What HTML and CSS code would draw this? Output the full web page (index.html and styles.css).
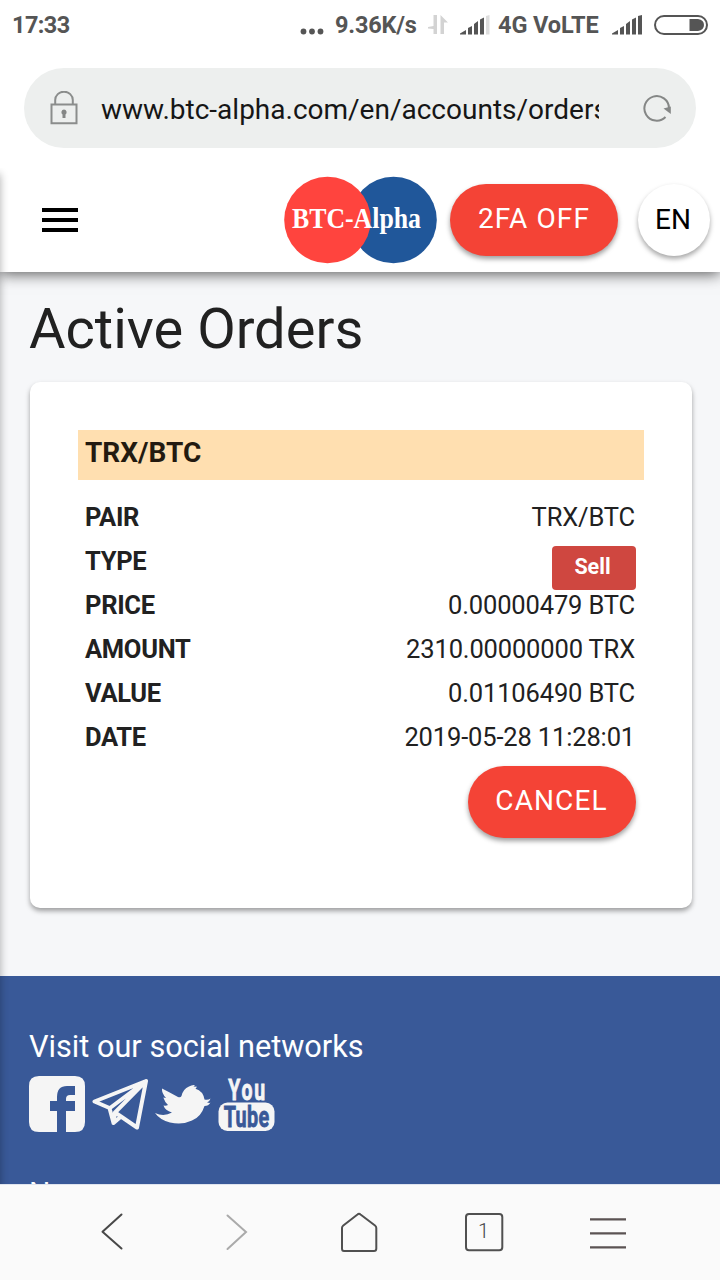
FILE: index.html
```html
<!DOCTYPE html>
<html lang="en">
<head>
<meta charset="utf-8">
<title>Active Orders</title>
<link rel="stylesheet" href="styles.css">
</head>
<body>
<div class="statusbar">
  <span class="clock">17:33</span>
  <div class="status-right">
    <svg class="st-dots" width="24" height="8" viewBox="0 0 24 8"><g fill="#555"><circle cx="3.5" cy="3.500" r="2.9"/><circle cx="12" cy="3.500" r="2.9"/><circle cx="20.500" cy="3.500" r="2.9"/></g></svg>
    <span class="speed">9.36K/s</span>
    <svg class="st-arrows" width="20" height="20" viewBox="0 0 20 20"><path fill="#d3d3d3" d="M5.500 0h3.500v19H5.500v-5L0 13.500V12l5.500-1zM12.500 0L20 7.500H16V19h-3.500z"/></svg>
    <svg class="st-sig" width="30" height="20" viewBox="0 0 30 20"><path fill="#555" d="M0 19.500v-1l6-3.500v4.500zM8 13l4-2v8.500H8zM14 9l4-3v13.500h-4zM20 4.500l4-2v17h-4z"/><path fill="#ddd" d="M26 1l3.500-1v19.500H26z"/></svg>
    <span class="net">4G VoLTE</span>
    <svg class="st-sig" width="30" height="20" viewBox="0 0 30 20"><path fill="#555" d="M0 19.500v-1l6-3.500v4.500zM8 13l4-2v8.500H8zM14 9l4-3v13.500h-4zM20 4.500l4-2v17h-4zM26 1l4-1v19.500h-4z"/></svg>
    <svg class="st-bat" width="54" height="20" viewBox="0 0 54 20"><rect x="1" y="1" width="52" height="18" rx="9" fill="none" stroke="#555" stroke-width="2"/><path fill="#555" d="M35.500 4H44q6 1 6 6t-6 6h-8.500z"/></svg>
  </div>
</div>
<div class="address">
  <svg class="lock" width="28" height="34" viewBox="0 0 28 34"><path d="M1.500 13.500h25v18.700h-25zM5.200 13V9a8.800 8.300 0 0 1 17.600 0V13" fill="none" stroke="#8b8d8c" stroke-width="2"/><path d="M14 18.500a2.700 2.700 0 0 1 1.500 4.900V27h-3v-3.600A2.700 2.700 0 0 1 14 18.500z" fill="#858786"/></svg>
  <span class="url">www.btc-alpha.com/en/accounts/orders</span>
  <svg class="reload" width="28" height="28" viewBox="0 0 28 28"><path d="M22.500 23A12.300 12.300 0 1 1 26 14" fill="none" stroke="#858786" stroke-width="2"/><path d="M20.500 14.500L27.800 12.500V20z" fill="#858786"/></svg>
</div>
<div class="page">
  <header class="topbar">
    <div class="burger"><i></i><i></i><i></i></div>
    <svg class="logo" width="154" height="88" viewBox="0 0 154 88"><circle cx="109.500" cy="44" r="43.300" fill="#20579a"/><circle cx="43.500" cy="44" r="43.300" fill="#ff443e"/><text x="8" y="51.500" textLength="129" lengthAdjust="spacingAndGlyphs">BTC-Alpha</text></svg>
    <button class="pill twofa">2FA OFF</button>
    <button class="lang">EN</button>
  </header>
  <main class="content">
    <h1>Active Orders</h1>
    <section class="card">
      <h2>TRX/BTC</h2>
      <dl>
        <div class="row"><dt>PAIR</dt><dd>TRX/BTC</dd></div>
        <div class="row"><dt>TYPE</dt><dd class="badge">Sell</dd></div>
        <div class="row"><dt>PRICE</dt><dd>0.00000479 BTC</dd></div>
        <div class="row"><dt>AMOUNT</dt><dd>2310.00000000 TRX</dd></div>
        <div class="row"><dt>VALUE</dt><dd>0.01106490 BTC</dd></div>
        <div class="row"><dt>DATE</dt><dd>2019-05-28 11:28:01</dd></div>
      </dl>
      <button class="pill cancel">CANCEL</button>
    </section>
  </main>
  <footer class="footer">
    <p class="social-title">Visit our social networks</p>
    <div class="social">
      <svg width="56" height="56" viewBox="0 0 56 56"><path fill="#f5f5f5" d="M10 0h36q10 0 10 10v36q0 10-10 10H37V35h9V25h-9v-2q0-4 4-4h5V10h-8q-10 0-10 11v4h-7v10h7v21H10Q0 56 0 46V10Q0 0 10 0z"/></svg>
      <svg width="57" height="56" viewBox="0 0 57 56"><path fill="none" stroke="#f5f5f5" stroke-width="4" stroke-linejoin="round" stroke-linecap="round" d="M54 5L2.500 25.500L17.500 32L21.500 47L29 40.500L45 51.500zM54 5L18 32M54 5L23 36.500L29 40.500M23 36.500L21.500 47"/></svg>
      <svg width="56" height="56" viewBox="0 0 56 56"><path fill="#f5f5f5" d="M0 37Q9 41 17 36.500Q10 34.500 8.500 29.500Q11 30 13 29Q10 26.500 8.300 21.500L11 22Q6.500 17 7 12.500Q14 16 23 21Q25.500 22 26.500 20Q28 13 34 10.500Q37 8.500 40 9L38.500 10.500L42 10.800L40.500 12.800Q48 15 49.500 23.500Q53 24.500 55.500 22.500Q55 25 52 26.500Q55 27.300 55.500 26.500Q53.500 30 49.500 30Q46 41 37 44.500Q28 49 15 46.500Q5 44 0 37z"/></svg>
      <svg width="57" height="56" viewBox="0 0 57 56"><rect x="0.500" y="26.500" width="56" height="28.500" rx="9" fill="#f5f5f5"/><text class="yt yt-top" transform="translate(10.200 23.500) scale(.65 1)" textLength="57" lengthAdjust="spacing">You</text><text class="yt yt-low" transform="translate(5.700 50.700) scale(.66 1)" textLength="69" lengthAdjust="spacing">Tube</text></svg>
    </div>
    <p class="news">News</p>
  </footer>
  <div class="drawer-edge"></div>
</div>
<nav class="bottomnav">
  <svg width="124" height="96" viewBox="50 1184 124 96"><path d="M121.500 1214.500L102.500 1231.800L121.500 1248.500" fill="none" stroke="#484848" stroke-width="2" stroke-linecap="round" stroke-linejoin="round"/></svg>
  <svg width="124" height="96" viewBox="174 1184 124 96"><path d="M227.500 1215.500L246 1232L227.500 1249" fill="none" stroke="#aaa" stroke-width="2" stroke-linecap="round"/></svg>
  <svg width="124" height="96" viewBox="298 1184 124 96"><path d="M357.500 1214.500Q359 1213 360.500 1214.500L375 1225.500Q376.300 1226.500 376.300 1228V1248.500Q376.300 1251 374 1251H344Q342 1251 342 1248.500V1228Q342 1226.500 343.300 1225.500z" fill="none" stroke="#505050" stroke-width="2" stroke-linejoin="round"/></svg>
  <svg width="124" height="96" viewBox="422 1184 124 96"><rect x="466" y="1214" width="36.300" height="36.300" rx="3" fill="none" stroke="#505050" stroke-width="2"/><text class="tabs" x="483.500" y="1238">1</text></svg>
  <svg width="124" height="96" viewBox="546 1184 124 96"><path d="M590 1219.300h36M590 1233.300h36M590 1247.300h36" stroke="#5b5353" stroke-width="2.200"/></svg>
</nav>
</body>
</html>
```
FILE: styles.css
```css
* { box-sizing: border-box; margin: 0; padding: 0; }
body { width: 720px; height: 1280px; overflow: hidden; background: #fff; color: #212121; font-family: Roboto, "Noto Sans", sans-serif; display: flex; flex-direction: column; }
button { border: 0; font-family: inherit; }
svg { display: block; flex: none; }

.statusbar { height: 68px; padding: 0 12px; display: flex; justify-content: space-between; align-items: flex-start; color: #555; font-size: 23.5px; font-weight: 700; line-height: 50px; }
.clock { letter-spacing: -.6px; }
.status-right { display: flex; height: 50px; align-items: center; }
.st-dots { margin: 13px 11px 0 0; }
.speed { width: 93px; white-space: nowrap; letter-spacing: -.2px; }
.st-arrows { margin-right: 12px; }
.st-sig { flex: none; }
.net { width: 104px; margin: 0 10px 0 8px; white-space: nowrap; letter-spacing: -.1px; }
.st-bat { margin: -1px 0 0 12px; }

.address { flex: none; height: 80px; margin: 0 24px 20px; padding: 0 25px 0 26px; border-radius: 40px; background: #edefee; display: flex; align-items: center; }
.url { width: 499px; margin: 0 44px 0 23px; overflow: hidden; white-space: nowrap; color: #161616; font-size: 28px; line-height: 40px; padding-top: 3px; }

.page { position: relative; flex: none; height: 1016px; overflow: hidden; background: #f6f7f9; }
.topbar { position: relative; height: 104px; padding: 0 10px 0 42px; background: #fff; display: flex; align-items: center; box-shadow: 0 2px 14px rgba(0,0,0,.65); clip-path: inset(0 0 -24px 0); }
.burger { width: 36px; display: grid; gap: 6px; margin-right: auto; }
.burger i { height: 4px; background: #000; }
.logo { margin-right: 12px; }
.logo text { font: 700 29px "Liberation Serif", serif; fill: #fff; }
.pill { width: 168px; height: 72px; border-radius: 36px; background: #f44336; color: #fff; font-size: 28px; line-height: 70px; letter-spacing: 1.1px; padding-bottom: 2px; box-shadow: 0 3px 5px rgba(0,0,0,.38); }
.twofa { margin-right: 20px; }
.lang { width: 72px; height: 72px; border-radius: 50%; background: #fff; color: #000; font-size: 28px; padding: 0 2px 2px 0; box-shadow: 0 3px 5px rgba(0,0,0,.35); }

.content { height: 704px; padding: 26px 28px 0 30px; }
h1 { height: 84px; margin-left: -1px; font-size: 56px; font-weight: 400; line-height: 62px; white-space: nowrap; }
.card { height: 526px; padding: 48px; border-radius: 10px; background: #fff; box-shadow: 0 3px 5px rgba(0,0,0,.36); }
h2 { height: 50px; background: #ffdfb0; padding-left: 7px; font-size: 28px; font-weight: 700; line-height: 45px; letter-spacing: 0; color: #231a10; }
dl { padding: 15px 8px 0 7px; }
.row { height: 44px; display: flex; justify-content: space-between; line-height: 44px; font-size: 25.500px; }
dt { font-weight: 700; letter-spacing: -.3px; }
dd { letter-spacing: -.15px; padding-right: 1px; }
.badge { align-self: flex-start; width: 84px; height: 44px; margin-top: 7px; border-radius: 4px; background: #cf4740; color: #fff; text-align: center; font-size: 21.500px; font-weight: 700; line-height: 41px; padding-right: 3px; letter-spacing: 0; }
.cancel { display: block; margin: 7px 8px 0 auto; padding-right: 1px; }

.footer { height: 208px; padding: 52px 29px 0; background: #395998; color: #fff; }
.social-title { font-size: 30.700px; line-height: 38px; height: 48px; white-space: nowrap; }
.social { display: flex; gap: 6.500px; }
.yt { font: 700 30px Roboto, sans-serif; stroke-width: .8px; }
.yt-top { fill: #f5f5f5; stroke: #f5f5f5; }
.yt-low { fill: #395998; stroke: #395998; }
.news { padding-top: 42px; font-size: 30px; line-height: 38px; }
.drawer-edge { position: absolute; left: -20px; top: 6px; width: 20px; height: 1030px; box-shadow: 0 0 9px rgba(0,0,0,.32); }

.bottomnav { flex: none; height: 96px; padding-left: 50px; background: #fafafa; box-shadow: inset 0 1px #dfe4ee; display: flex; }
.tabs { font: 300 20px Roboto, sans-serif; text-anchor: middle; fill: #444; }
```
